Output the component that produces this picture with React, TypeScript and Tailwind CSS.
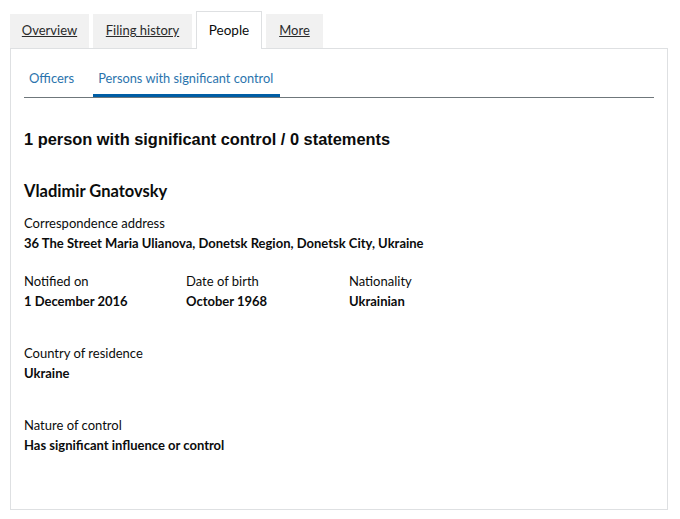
import React from "react";

const Field = ({ label, value, className = "" }: { label: string; value: string; className?: string }) => (
  <div className={className}>
    <div className="text-[13px] leading-[20px] text-[#0b0c0c]">{label}</div>
    <div className="text-[13px] font-bold leading-[20px] text-[#0b0c0c]">{value}</div>
  </div>
);

export default function App() {
  return (
    <div className="min-h-[519px] bg-white px-[10px] pt-[11px] font-['Lato',sans-serif] text-[#0b0c0c]">
      <div className="flex items-end gap-[4px]">
        <a className="flex h-[34px] w-[79px] items-center justify-center bg-[#f1f1f1] text-[13px] text-[#2a2a2a] underline">Overview</a>
        <a className="flex h-[34px] w-[99px] items-center justify-center bg-[#f1f1f1] text-[13px] text-[#2a2a2a] underline">Filing history</a>
        <span className="relative -mb-px flex h-[38px] w-[66px] items-center justify-center border border-b-0 border-[#dee0e2] bg-white text-[13.5px]">
          People
        </span>
        <a className="flex h-[34px] w-[57px] items-center justify-center bg-[#f1f1f1] text-[13px] text-[#2a2a2a] underline">More</a>
      </div>
      <div className="h-[462px] w-[658px] border border-[#dee0e2] px-[13px]">
        <div className="flex border-b border-[#6f777b] pt-[20px]">
          <span className="px-[5px] pb-[8px] text-[13px] text-[#2b74ad]">Officers</span>
          <span className="ml-[14px] w-[187px] border-b-[3px] border-[#005ea5] px-[5px] pb-[5px] text-[12.8px] text-[#2b74ad]">
            Persons with significant control
          </span>
        </div>
        <h2 className="mt-[31px] font-['Liberation_Sans',sans-serif] text-[16.4px] font-bold leading-[20px]">
          1 person with significant control / 0 statements
        </h2>
        <h3 className="mt-[32px] text-[16.5px] font-bold leading-[20px]">Vladimir Gnatovsky</h3>
        <Field className="mt-[12px]" label="Correspondence address" value="36 The Street Maria Ulianova, Donetsk Region, Donetsk City, Ukraine" />
        <div className="mt-[18px] grid grid-cols-[162px_163px_162px]">
          <Field label="Notified on" value="1 December 2016" />
          <Field label="Date of birth" value="October 1968" />
          <Field label="Nationality" value="Ukrainian" />
        </div>
        <Field className="mt-[32px]" label="Country of residence" value="Ukraine" />
        <Field className="mt-[32px]" label="Nature of control" value="Has significant influence or control" />
      </div>
    </div>
  );
}
